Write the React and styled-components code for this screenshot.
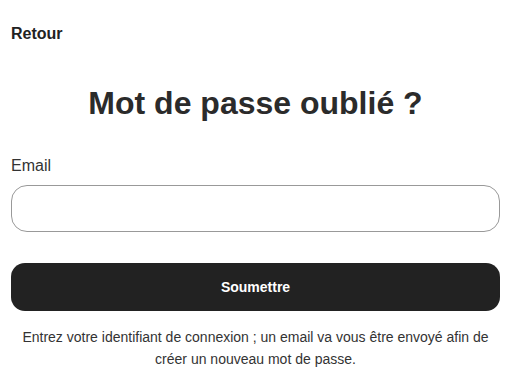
import React from 'react'
import styled, { createGlobalStyle } from 'styled-components'

const GlobalSC = createGlobalStyle`
  body {
    margin: 0;
    background: #fff;
    font-family: "Liberation Sans", Arial, sans-serif;
    color: #333;
  }
`

const PageSC = styled.div`
  display: flex;
  flex-direction: column;
  padding: 0 16px 0 11px;
`

const BackSC = styled.a`
  font-size: 16px;
  font-weight: 700;
  color: #222;
  margin-top: 25px;
  line-height: 18px;
  text-decoration: none;
  cursor: pointer;
`

const TitleSC = styled.h1`
  font-size: 32px;
  font-weight: 700;
  text-align: center;
  color: #2b2b2b;
  margin: 42px 0 0;
  line-height: 36px;
`

const LabelSC = styled.label`
  font-size: 16px;
  color: #333;
  margin-top: 36px;
  line-height: 18px;
`

const InputSC = styled.input`
  margin-top: 10px;
  height: 47px;
  box-sizing: border-box;
  border: 1px solid #999;
  border-radius: 16px;
  padding: 0 16px;
  font-size: 15px;
  font-family: inherit;
  outline: none;
`

const ButtonSC = styled.button`
  margin-top: 31px;
  height: 48px;
  border: none;
  border-radius: 14px;
  background: #222;
  color: #fff;
  font-family: inherit;
  font-size: 14px;
  font-weight: 700;
  cursor: pointer;
`

const HelpSC = styled.p`
  margin: 15px 0 0;
  font-size: 14px;
  line-height: 22px;
  text-align: center;
  color: #333;
`

export default function App() {
  return (
    <>
      <GlobalSC />
      <PageSC>
        <BackSC>Retour</BackSC>
        <TitleSC>Mot de passe oublié ?</TitleSC>
        <LabelSC htmlFor='email'>Email</LabelSC>
        <InputSC id='email' type='email' name='email' />
        <ButtonSC type='submit'>Soumettre</ButtonSC>
        <HelpSC>
          Entrez votre identifiant de connexion ; un email va vous être envoyé afin de
          créer un nouveau mot de passe.
        </HelpSC>
      </PageSC>
    </>
  )
}
